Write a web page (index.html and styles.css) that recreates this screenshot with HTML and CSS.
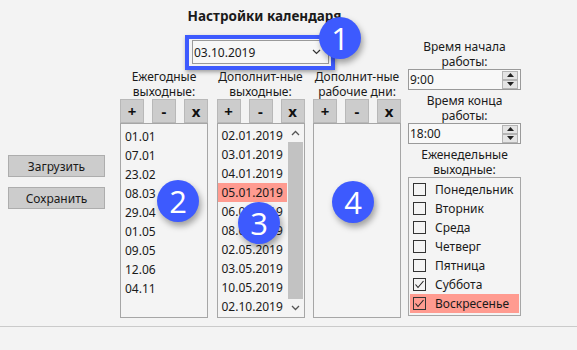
FILE: index.html
```html
<!DOCTYPE html>
<html lang="ru">
<head>
    <meta charset="UTF-8" />
    <title>Настройки календаря</title>
    <link rel="stylesheet" href="styles.css">
</head>
<body>
    <div class="window">
        <div class="side">
            <button class="btn">Загрузить</button>
            <button class="btn">Сохранить</button>
        </div>

        <div class="main">
            <div class="title">Настройки календаря</div>
            <div class="combo-row">
                <div class="focus">
                    <div class="combo">
                        <span>03.10.2019</span>
                        <svg class="chevron" width="9" height="6" viewBox="0 0 9 6"><polyline points="1,1 4.5,4.5 8,1" fill="none" stroke="#333" stroke-width="1.2"/></svg>
                    </div>
                </div>
            </div>

            <div class="cols">
                <div class="col">
                    <div class="label">Ежегодные<br>выходные:</div>
                    <div class="tools">
                        <button class="tool">+</button>
                        <button class="tool">-</button>
                        <button class="tool">x</button>
                    </div>
                    <div class="list">
                        <div class="item">01.01</div>
                        <div class="item">07.01</div>
                        <div class="item">23.02</div>
                        <div class="item">08.03</div>
                        <div class="item">29.04</div>
                        <div class="item">01.05</div>
                        <div class="item">09.05</div>
                        <div class="item">12.06</div>
                        <div class="item">04.11</div>
                    </div>
                </div>

                <div class="col">
                    <div class="label">Дополнит-ные<br>выходные:</div>
                    <div class="tools">
                        <button class="tool">+</button>
                        <button class="tool">-</button>
                        <button class="tool">x</button>
                    </div>
                    <div class="list scrolled">
                        <div class="items">
                            <div class="item">02.01.2019</div>
                            <div class="item">03.01.2019</div>
                            <div class="item">04.01.2019</div>
                            <div class="item selected">05.01.2019</div>
                            <div class="item">06.01.2019</div>
                            <div class="item">08.01.2019</div>
                            <div class="item">02.05.2019</div>
                            <div class="item">03.05.2019</div>
                            <div class="item">10.05.2019</div>
                            <div class="item">02.10.2019</div>
                        </div>
                        <div class="scrollbar">
                            <svg class="arrow" width="9" height="6" viewBox="0 0 9 6"><polyline points="1,5 4.5,1.5 8,5" fill="none" stroke="#555" stroke-width="1.3"/></svg>
                            <div class="thumb"></div>
                            <svg class="arrow" width="9" height="6" viewBox="0 0 9 6"><polyline points="1,1 4.5,4.5 8,1" fill="none" stroke="#555" stroke-width="1.3"/></svg>
                        </div>
                    </div>
                </div>

                <div class="col">
                    <div class="label">Дополнит-ные<br>рабочие дни:</div>
                    <div class="tools">
                        <button class="tool">+</button>
                        <button class="tool">-</button>
                        <button class="tool">x</button>
                    </div>
                    <div class="list"></div>
                </div>
            </div>
        </div>

        <div class="right">
            <div class="label">Время начала<br>работы:</div>
            <div class="spin">
                <span>9:00</span>
                <div class="spin-btns">
                    <div class="half"><svg width="7" height="4" viewBox="0 0 7 4"><polygon points="0,4 3.5,0 7,4" fill="#222"/></svg></div>
                    <div class="half"><svg width="7" height="4" viewBox="0 0 7 4"><polygon points="0,0 3.5,4 7,0" fill="#222"/></svg></div>
                </div>
            </div>
            <div class="label">Время конца<br>работы:</div>
            <div class="spin">
                <span>18:00</span>
                <div class="spin-btns">
                    <div class="half"><svg width="7" height="4" viewBox="0 0 7 4"><polygon points="0,4 3.5,0 7,4" fill="#222"/></svg></div>
                    <div class="half"><svg width="7" height="4" viewBox="0 0 7 4"><polygon points="0,0 3.5,4 7,0" fill="#222"/></svg></div>
                </div>
            </div>
            <div class="label">Еженедельные<br>выходные:</div>
            <div class="checks">
                <div class="check"><span class="box"></span>Понедельник</div>
                <div class="check"><span class="box"></span>Вторник</div>
                <div class="check"><span class="box"></span>Среда</div>
                <div class="check"><span class="box"></span>Четверг</div>
                <div class="check"><span class="box"></span>Пятница</div>
                <div class="check"><span class="box"><svg width="11" height="11" viewBox="0 0 11 11"><polyline points="1.5,5.5 4,8.5 9.5,2" fill="none" stroke="#222" stroke-width="1.1"/></svg></span>Суббота</div>
                <div class="check selected"><span class="box"><svg width="11" height="11" viewBox="0 0 11 11"><polyline points="1.5,5.5 4,8.5 9.5,2" fill="none" stroke="#222" stroke-width="1.1"/></svg></span>Воскресенье</div>
            </div>
        </div>

        <!-- numbered callouts -->
        <div class="badge b1">1</div>
        <div class="badge b2">2</div>
        <div class="badge b3">3</div>
        <div class="badge b4">4</div>
    </div>
</body>
</html>
```

FILE: styles.css
```css
body {
    margin: 0;
    background-color: #f3f3f3;
    font-family: "Noto Sans", "Open Sans", sans-serif;
    font-size: 12px;
    color: #1a1a1a;
}
.window {
    position: relative;
    display: flex;
    width: 577px;
    height: 326px;
    border-bottom: 1px solid #cacaca;
}
.side {
    display: flex;
    flex-direction: column;
    width: 112px;
    padding: 155px 0 0 8px;
    gap: 10px;
}
.btn {
    width: 97px;
    height: 22px;
    padding: 0;
    border: 1px solid #adadad;
    background-color: #cccccc;
    font-family: inherit;
    font-size: 12px;
    color: #1a1a1a;
}
.main {
    display: flex;
    flex-direction: column;
    width: 281px;
}
.title {
    height: 19px;
    padding: 7px 0 0 8px;
    text-align: center;
    font-weight: bold;
    font-size: 13.5px;
    line-height: 19px;
}
.combo-row {
    display: flex;
    justify-content: center;
    padding: 9px 1px 0 0;
    height: 34px;
}
.focus {
    border: 4px solid #3d5afe;
    padding: 1px 2px 2px 3px;
    height: 24px;
    box-shadow: 1px 2px 4px rgba(0, 0, 0, 0.35);
}
.combo {
    display: flex;
    align-items: center;
    justify-content: space-between;
    width: 134px;
    height: 22px;
    padding-left: 1px;
    border: 1px solid #9a9a9a;
    background-color: #f7f7f7;
}
.chevron {
    margin-right: 7px;
}
.cols {
    display: flex;
    justify-content: space-between;
}
.col {
    display: flex;
    flex-direction: column;
    width: 88px;
}
.label {
    height: 30px;
    text-align: center;
    line-height: 15px;
}
.tools {
    display: flex;
    justify-content: space-between;
    height: 24px;
}
.tool {
    width: 24px;
    height: 24px;
    padding: 0;
    border: 1px solid #b8b8b8;
    background-color: #cccccc;
    font-family: "Noto Sans", sans-serif;
    font-weight: bold;
    font-size: 15px;
    line-height: 20px;
    color: #111;
}
.list {
    height: 187px;
    padding: 3px 0;
    border: 1px solid #a6a6a6;
    background-color: #f4f4f4;
}
.item {
    height: 19px;
    padding-left: 4px;
    line-height: 19px;
}
.scrolled {
    display: flex;
    padding: 0;
    height: 193px;
}
.items {
    flex: 1;
    padding-top: 2px;
}
.item.selected {
    background-color: #ff9b90;
}
.scrollbar {
    display: flex;
    flex-direction: column;
    align-items: center;
    width: 17px;
}
.arrow {
    margin: 6px 0 6px;
}
.thumb {
    flex: 1;
    width: 15px;
    background-color: #c2c2c2;
}
.right {
    display: flex;
    flex-direction: column;
    width: 113px;
    margin-left: 7px;
    padding-top: 36px;
}
.right .label {
    margin-top: 3px;
}
.spin {
    display: flex;
    align-items: center;
    justify-content: space-between;
    height: 19px;
    padding-left: 1px;
    border: 1px solid #9a9a9a;
    background-color: #f8f8f8;
}
.spin-btns {
    display: flex;
    flex-direction: column;
    margin-right: 2px;
}
.half {
    display: flex;
    align-items: center;
    justify-content: center;
    width: 14px;
    height: 7px;
    border: 1px solid #b4b4b4;
    background-color: #e4e4e4;
}
.check {
    display: flex;
    align-items: center;
    height: 19px;
}
.checks {
    height: 135px;
    padding: 2px 1px 0;
    border: 1px solid #a6a6a6;
    background-color: #f4f4f4;
}
.check.selected {
    background-color: #ff9b90;
}
.box {
    display: flex;
    align-items: center;
    justify-content: center;
    width: 11px;
    height: 11px;
    margin: 0 9px 0 3px;
    border: 1px solid #333;
}
.badge {
    position: absolute;
    width: 42px;
    height: 42px;
    border-radius: 50%;
    background-color: #3d5afe;
    color: #fff;
    font-family: "Open Sans", "Noto Sans", sans-serif;
    font-size: 31px;
    line-height: 42px;
    text-align: center;
    box-shadow: 2px 4px 6px rgba(0, 0, 0, 0.35);
}
.b1 { left: 319px; top: 17px; }
.b2 { left: 157px; top: 180px; }
.b3 { left: 238px; top: 202px; }
.b4 { left: 332px; top: 181px; }
```
